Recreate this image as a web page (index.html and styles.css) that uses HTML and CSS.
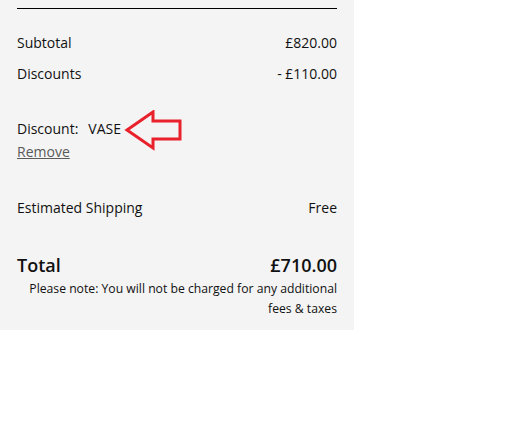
FILE: index.html
```html
<!DOCTYPE html>
<html lang="en">
<head>
    <meta charset="UTF-8">
    <title>Order summary</title>
    <link rel="stylesheet" href="styles.css">
</head>
<body>
<div class="summary">
    <div class="summary-inner">
        <div class="row row-first">
            <span>Subtotal</span>
            <span>£820.00</span>
        </div>
        <div class="row row-discounts">
            <span>Discounts</span>
            <span>- £110.00</span>
        </div>

        <div class="discount-code">
            <span class="code-label">Discount:</span>
            <span class="code-value">VASE</span>
            <svg class="callout-arrow" width="60" height="44" viewBox="0 0 60 44">
                <polygon points="3,20 29,2 29,11 56,11 56,29 29,29 29,38" fill="none" stroke="#e8212b" stroke-width="3" stroke-linejoin="miter"/>
            </svg>
        </div>
        <a class="remove" href="#">Remove</a>

        <div class="row row-shipping">
            <span>Estimated Shipping</span>
            <span>Free</span>
        </div>

        <div class="row row-total">
            <span>Total</span>
            <span>£710.00</span>
        </div>
        <p class="note">Please note: You will not be charged for any additional fees &amp; taxes</p>
    </div>
</div>
</body>
</html>
```

FILE: styles.css
```css
body {
    background-color: #fff;
    margin: 0;
    padding: 0;
    font-size: 14px;
    font-family: "Open Sans", sans-serif;
    color: #111;
}
.summary {
    width: 354px;
    background-color: #f4f4f4;
    padding: 8px 17px 11px;
    box-sizing: border-box;
}
.summary-inner {
    border-top: 1px solid #000;
}
.row {
    display: flex;
    justify-content: space-between;
    align-items: center;
    line-height: 20px;
}
.row-first {
    margin-top: 24px;
}
.row-discounts {
    margin-top: 11px;
}
.discount-code {
    position: relative;
    display: flex;
    align-items: center;
    margin-top: 35px;
    line-height: 20px;
}
.discount-code .code-value {
    margin-left: 10px;
}
.callout-arrow {
    position: absolute;
    left: 107px;
    top: -9px;
}
.remove {
    display: inline-block;
    margin-top: 3px;
    line-height: 20px;
    color: #5a5a5a;
    text-decoration: underline;
}
.row-shipping {
    margin-top: 36px;
}
.row-total {
    margin-top: 35px;
    line-height: 24px;
    font-size: 18px;
    font-weight: 600;
}
.note {
    margin: 2px 0 0;
    text-align: right;
    font-size: 12.2px;
    line-height: 20px;
}
```
